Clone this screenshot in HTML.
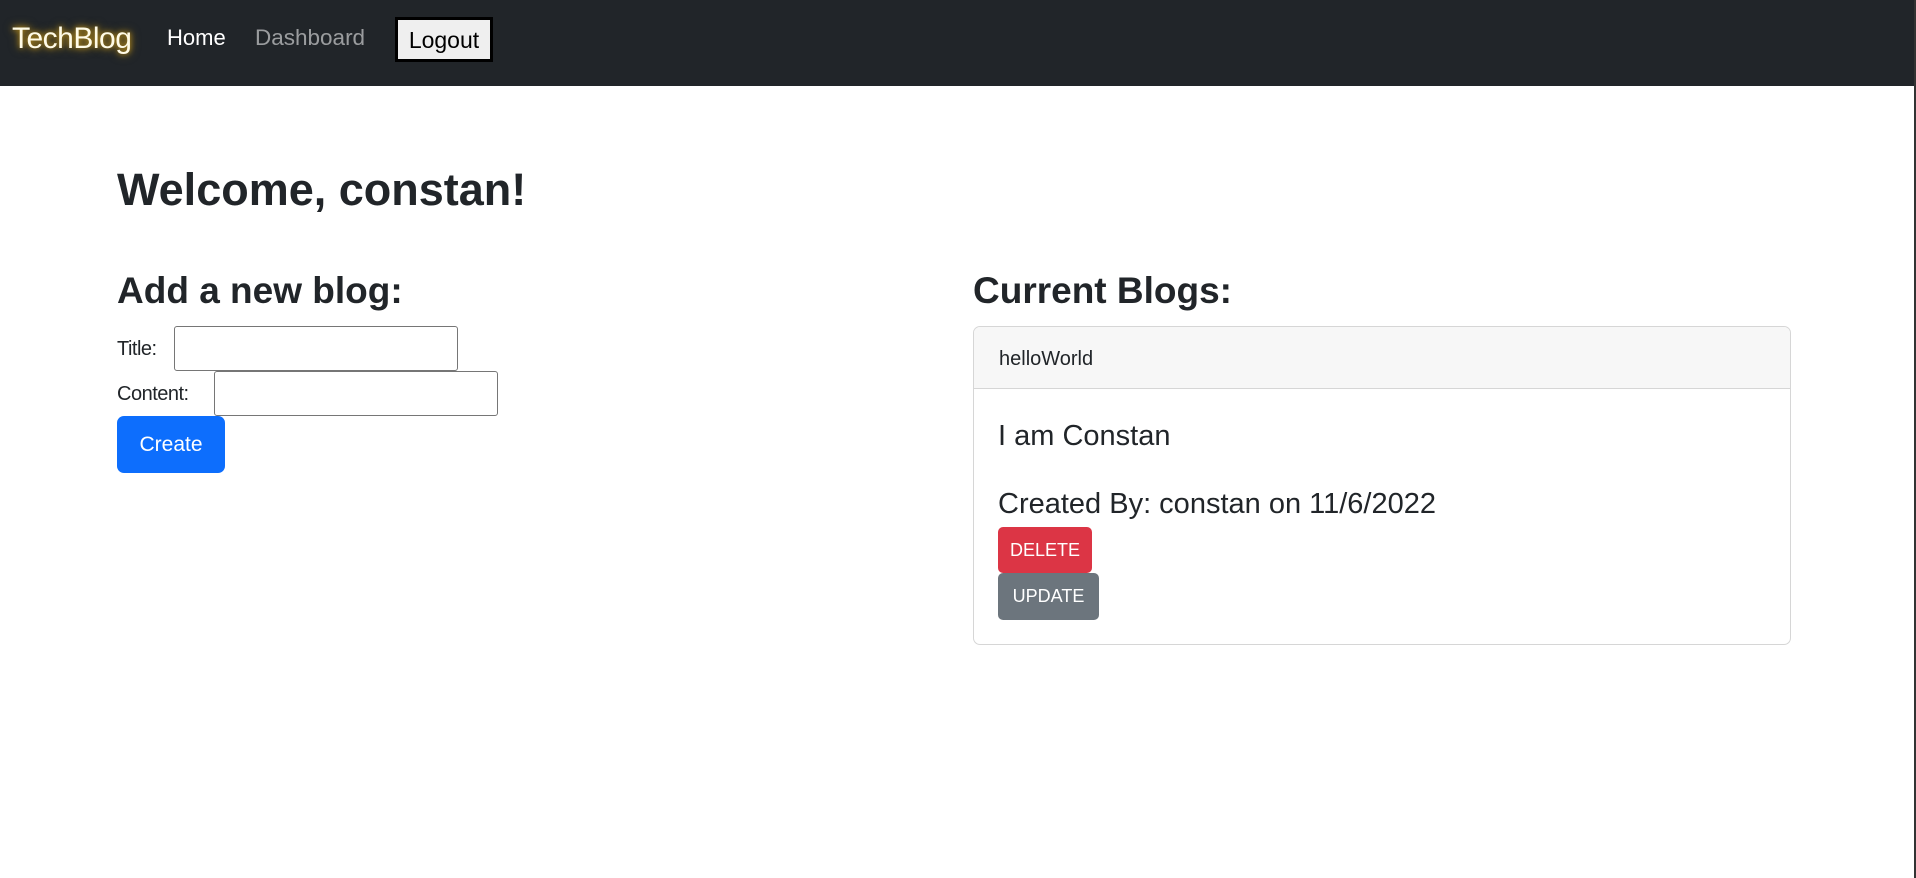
<!DOCTYPE html>
<html><head><meta charset="utf-8"><style>
*{margin:0;padding:0;box-sizing:border-box}
body{width:1916px;height:878px;background:#fff;font-family:"Liberation Sans",sans-serif;color:#212529;position:relative;overflow:hidden}
.a{position:absolute;white-space:nowrap}
.nav{left:0;top:0;width:1914px;height:86px;background:#212529}
</style></head><body>
<div class="a nav"></div>
<div class="a" style="left:1914px;top:0;width:2px;height:878px;background:#333"></div>
<div class="a" style="left:12px;top:22px;font-size:30px;color:#fffbe6;text-shadow:0 0 6px #d4a017,0 0 10px rgba(212,160,23,.6);letter-spacing:-0.5px">TechBlog</div>
<div class="a" style="left:167px;top:25px;font-size:22px;color:#fff">Home</div>
<div class="a" style="left:255px;top:25px;font-size:22.5px;color:rgba(255,255,255,.55)">Dashboard</div>
<div class="a" style="left:395px;top:17px;width:98px;height:45px;background:#efefef;border:3px solid #000;font-size:23px;line-height:41px;text-align:center;color:#000">Logout</div>

<div class="a" style="left:117px;top:164px;font-size:45px;font-weight:bold">Welcome, constan!</div>
<div class="a" style="left:117px;top:270px;font-size:37px;font-weight:bold">Add a new blog:</div>
<div class="a" style="left:973px;top:270px;font-size:37px;font-weight:bold">Current Blogs:</div>

<div class="a" style="left:117px;top:338px;font-size:20px;letter-spacing:-0.5px">Title:</div>
<div class="a" style="left:174px;top:326px;width:284px;height:45px;border:1px solid #767676;border-radius:3px"></div>
<div class="a" style="left:117px;top:383px;font-size:20px;letter-spacing:-0.5px">Content:</div>
<div class="a" style="left:214px;top:371px;width:284px;height:45px;border:1px solid #767676;border-radius:3px"></div>
<div class="a" style="left:117px;top:416px;width:108px;height:57px;background:#0d6efd;border-radius:7px;color:#fff;font-size:21px;line-height:57px;text-align:center">Create</div>

<div class="a" style="left:973px;top:326px;width:818px;height:319px;border:1px solid #d6d6d6;border-radius:7px;overflow:hidden">
  <div style="height:62px;background:#f7f7f7;border-bottom:1px solid #d6d6d6;font-size:20px;padding:21px 0 0 25px">helloWorld</div>
</div>
<div class="a" style="left:998px;top:420px;font-size:29px">I am Constan</div>
<div class="a" style="left:998px;top:488px;font-size:29px">Created By: constan on 11/6/2022</div>
<div class="a" style="left:998px;top:527px;width:94px;height:46px;background:#dc3545;border-radius:5px;color:#fff;font-size:18px;line-height:46px;text-align:center">DELETE</div>
<div class="a" style="left:998px;top:573px;width:101px;height:47px;background:#6c757d;border-radius:5px;color:#fff;font-size:18px;line-height:47px;text-align:center">UPDATE</div>
</body></html>
